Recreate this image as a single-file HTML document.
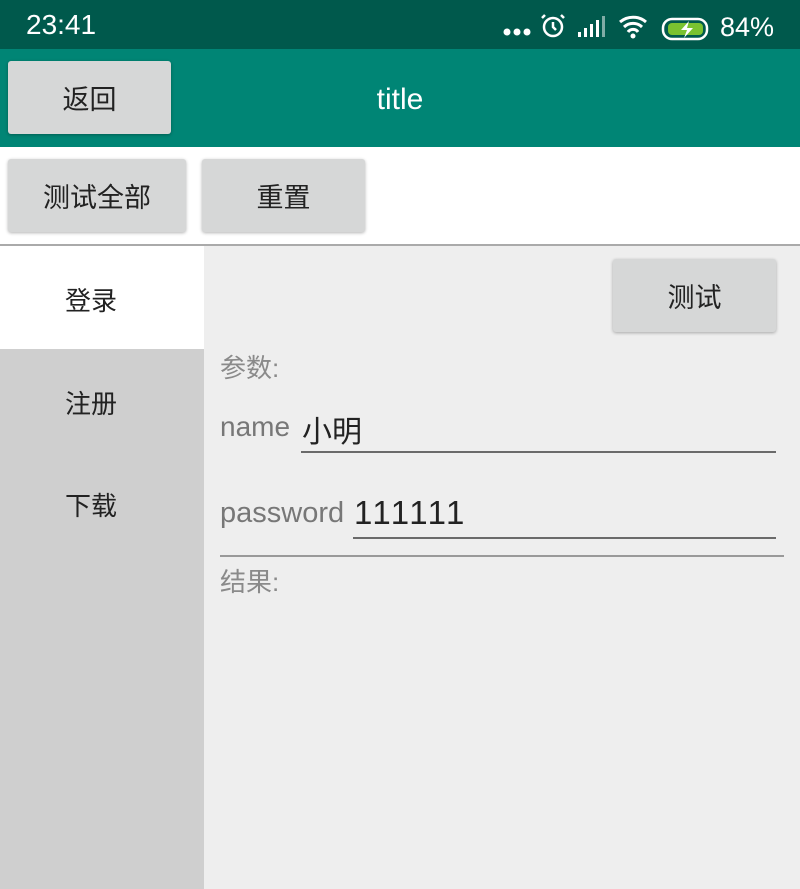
<!DOCTYPE html>
<html><head><meta charset="utf-8"><style>
*{margin:0;padding:0;box-sizing:border-box}
body{width:800px;height:889px;overflow:hidden;background:#fff;font-family:"Liberation Sans","Noto Sans CJK SC",sans-serif;position:relative}
.abs{position:absolute}
.btn{position:absolute;background:#d6d7d7;border-radius:3px;box-shadow:0 1px 3px rgba(0,0,0,.3);color:#222;font-size:27px;display:flex;align-items:center;justify-content:center}
</style></head><body>
<div class="abs" style="left:0;top:0;width:800px;height:49px;background:#00594c"></div>
<div class="abs" style="left:26px;top:9px;color:#fff;font-size:28px">23:41</div>
<svg class="abs" style="left:500px;top:8px" width="300" height="34" viewBox="0 0 300 34">
<g fill="#fff"><circle cx="7" cy="24" r="3.5"/><circle cx="17" cy="24" r="3.5"/><circle cx="27" cy="24" r="3.5"/></g>
<g fill="none" stroke="#fff" stroke-width="2.5"><circle cx="53" cy="19" r="9"/><path d="M53 14v5l3 3M45 7l-3 3M61 7l3 3"/></g>
<g fill="#fff"><rect x="78" y="24" width="3" height="5"/><rect x="84" y="20" width="3" height="9"/><rect x="90" y="16" width="3" height="13"/><rect x="96" y="12" width="3" height="17"/><rect x="102" y="8" width="3" height="21" opacity=".5"/></g>
<g fill="none" stroke="#fff" stroke-width="3"><path d="M120 14a20 20 0 0 1 26 0M124 19a13 13 0 0 1 18 0M128 24a6 6 0 0 1 10 0"/></g>
<circle cx="133" cy="28" r="2.5" fill="#fff"/>
<rect x="163" y="11" width="44" height="20" rx="9" fill="none" stroke="#fff" stroke-width="2.5"/>
<rect x="168" y="15" width="35" height="12" rx="4" fill="#7ac230"/>
<path d="M189 13l-8 9h6l-3 8 9-10h-6z" fill="#fff"/>
<text x="220" y="28" fill="#fff" font-size="27" font-family="Liberation Sans">84%</text>
</svg>
<div class="abs" style="left:0;top:49px;width:800px;height:98px;background:#008575"></div>
<div class="btn" style="left:8px;top:61px;width:163px;height:73px">返回</div>
<div class="abs" style="left:0;top:83px;width:800px;text-align:center;color:#fff;font-size:30px">title</div>
<div class="btn" style="left:8px;top:159px;width:178px;height:73px">测试全部</div>
<div class="btn" style="left:202px;top:159px;width:163px;height:73px">重置</div>
<div class="abs" style="left:0;top:244px;width:800px;height:2px;background:#aaa"></div>
<div class="abs" style="left:0;top:246px;width:204px;height:643px;background:#cfcfcf"></div>
<div class="abs" style="left:0;top:246px;width:204px;height:103px;background:#fff"></div>
<div class="abs" style="left:0;top:281px;width:182px;text-align:center;font-size:26px;color:#222">登录</div>
<div class="abs" style="left:0;top:384px;width:182px;text-align:center;font-size:26px;color:#222">注册</div>
<div class="abs" style="left:0;top:486px;width:182px;text-align:center;font-size:26px;color:#222">下载</div>
<div class="abs" style="left:204px;top:246px;width:596px;height:643px;background:#eeeeee"></div>
<div class="btn" style="left:613px;top:259px;width:163px;height:73px">测试</div>
<div class="abs" style="left:220px;top:348px;font-size:26px;color:#8a8a8a">参数:</div>
<div class="abs" style="left:220px;top:411px;font-size:28px;color:#777">name</div>
<div class="abs" style="left:302px;top:407px;font-size:30px;color:#222">小明</div>
<div class="abs" style="left:301px;top:451px;width:475px;height:2px;background:#6a6a6a"></div>
<div class="abs" style="left:220px;top:497px;font-size:29px;color:#777">password</div>
<div class="abs" style="left:354px;top:494px;font-size:33px;letter-spacing:2.5px;color:#222">111111</div>
<div class="abs" style="left:353px;top:537px;width:423px;height:2px;background:#6a6a6a"></div>
<div class="abs" style="left:220px;top:555px;width:564px;height:2px;background:#999"></div>
<div class="abs" style="left:220px;top:562px;font-size:26px;color:#8a8a8a">结果:</div>
</body></html>
